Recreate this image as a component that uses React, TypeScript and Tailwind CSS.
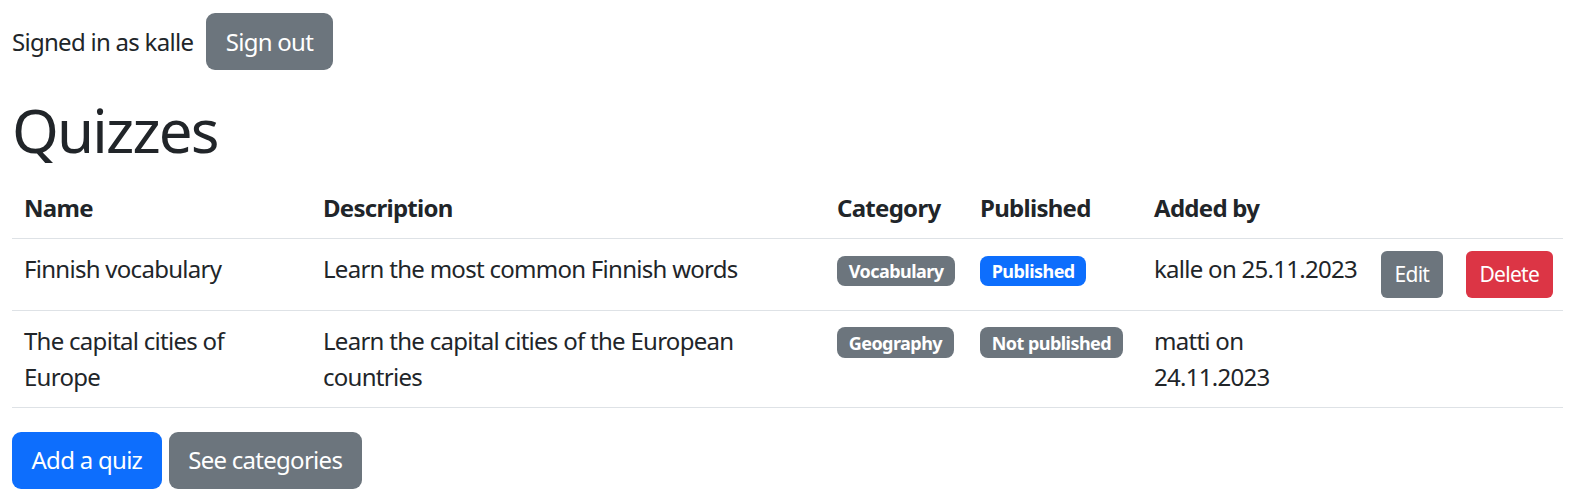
import React from "react";

type Quiz = {
  name: string;
  description: string;
  category: string;
  published: boolean;
  addedBy: string;
  owned: boolean;
};

const quizzes: Quiz[] = [
  {
    name: "Finnish vocabulary",
    description: "Learn the most common Finnish words",
    category: "Vocabulary",
    published: true,
    addedBy: "kalle on 25.11.2023",
    owned: true,
  },
  {
    name: "The capital cities of Europe",
    description: "Learn the capital cities of the European countries",
    category: "Geography",
    published: false,
    addedBy: "matti on 24.11.2023",
    owned: false,
  },
];

const Badge = ({ children, blue = false }: { children: React.ReactNode; blue?: boolean }) => (
  <span
    className={
      "inline-block rounded-[8px] px-[11.7px] py-[6.3px] text-[18px] font-bold leading-none tracking-[-0.03em] text-white align-baseline " +
      (blue ? "bg-[#0d6efd]" : "bg-[#6c757d]")
    }
  >
    {children}
  </span>
);

export default function App() {
  return (
    <div className="bg-white pl-[12px] pt-[13px] font-['Noto_Sans',sans-serif] text-[24px] leading-[36px] tracking-[-0.03em] text-[#212529]">
      <div className="flex items-center gap-[13px]">
        <span>Signed in as kalle</span>
        <button className="rounded-[9px] bg-[#6c757d] px-[19.5px] py-[10.5px] text-white">
          Sign out
        </button>
      </div>

      <h1 className="mt-[24px] mb-[12px] text-[60px] leading-[72px] font-normal tracking-[-0.03em]">
        Quizzes
      </h1>

      <table className="mb-[24px] w-[1551px] table-fixed border-collapse">
        <colgroup>
          <col className="w-[299px]" />
          <col className="w-[514px]" />
          <col className="w-[143px]" />
          <col className="w-[174px]" />
          <col className="w-[227px]" />
          <col className="w-[85px]" />
          <col className="w-[109px]" />
        </colgroup>
        <thead>
          <tr className="border-b border-[#dee2e6]">
            <th className="p-[12px] text-left align-bottom font-bold">Name</th>
            <th className="p-[12px] text-left align-bottom font-bold">Description</th>
            <th className="p-[12px] text-left align-bottom font-bold">Category</th>
            <th className="p-[12px] text-left align-bottom font-bold">Published</th>
            <th className="p-[12px] text-left align-bottom font-bold whitespace-nowrap">Added by</th>
            <th className="p-[12px]"></th>
            <th className="p-[12px]"></th>
          </tr>
        </thead>
        <tbody>
          {quizzes.map((q) => (
            <tr key={q.name} className="border-b border-[#dee2e6]">
              <td className="p-[12px] align-top">{q.name}</td>
              <td className="p-[12px] align-top">{q.description}</td>
              <td className="p-[12px] align-top">
                <Badge>{q.category}</Badge>
              </td>
              <td className="p-[12px] align-top">
                <Badge blue={q.published}>{q.published ? "Published" : "Not published"}</Badge>
              </td>
              <td className={"p-[12px] align-top " + (q.owned ? "whitespace-nowrap" : "")}>
                {q.addedBy}
              </td>
              <td className="p-[12px] align-top">
                {q.owned && (
                  <button className="rounded-[6px] bg-[#6c757d] px-[13.5px] py-[7.5px] text-[21px] leading-[31.5px] text-white">
                    Edit
                  </button>
                )}
              </td>
              <td className="p-[12px] align-top">
                {q.owned && (
                  <button className="rounded-[6px] bg-[#dc3545] px-[13.5px] py-[7.5px] text-[21px] leading-[31.5px] text-white">
                    Delete
                  </button>
                )}
              </td>
            </tr>
          ))}
        </tbody>
      </table>

      <div className="flex gap-[7px]">
        <button className="rounded-[9px] bg-[#0d6efd] px-[19.5px] py-[10.5px] text-white">
          Add a quiz
        </button>
        <button className="rounded-[9px] bg-[#6c757d] px-[19.5px] py-[10.5px] text-white">
          See categories
        </button>
      </div>
    </div>
  );
}
